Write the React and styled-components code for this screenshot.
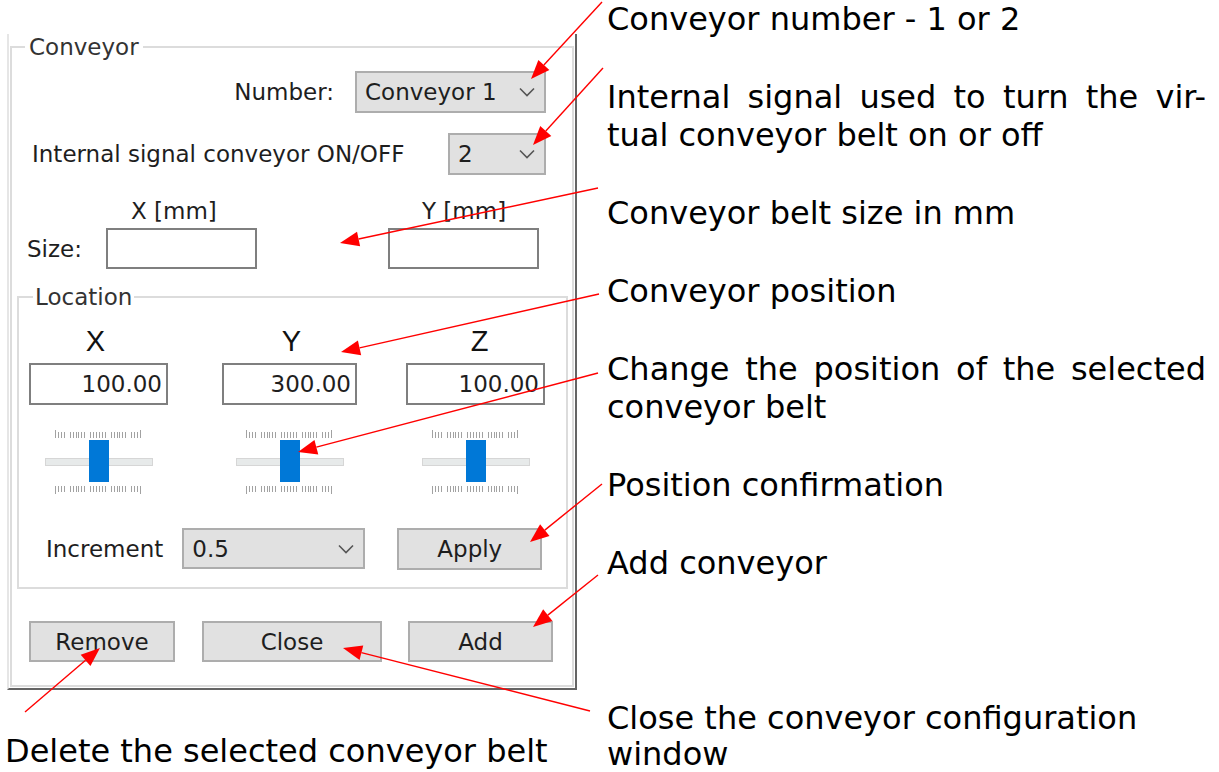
import React from 'react';
import styled, { createGlobalStyle } from 'styled-components';

const GlobalStyle = createGlobalStyle`
  html, body {
    margin: 0;
    padding: 0;
    background: #fff;
  }
  body {
    font-family: "DejaVu Sans", Verdana, sans-serif;
  }
`;

const Page = styled.div`
  position: relative;
  width: 1219px;
  height: 772px;
  display: flex;
  overflow: hidden;
  background: #fff;
`;

const LeftCol = styled.div`
  flex: none;
  width: 590px;
  display: flex;
  flex-direction: column;
`;

/* dialog window, cropped at the top */
const Window = styled.div`
  margin: 34px 0 0 7px;
  width: 570px;
  box-sizing: border-box;
  border-left: 2px solid #e6e6e6;
  border-right: 2px solid #646464;
  border-bottom: 2px solid #646464;
  padding: 0 1px 1px 1px;
  background: #fff;
  font-size: 23px;
  color: #1e1e1e;
`;

const Group = styled.fieldset`
  margin: ${(p) => p.$margin || '0'};
  min-width: 0;
  padding: ${(p) => p.$pad || '0'};
  border: 2px solid #dcdcdc;
`;

const Legend = styled.legend`
  margin-left: ${(p) => p.$offset}px;
  padding: 0 ${(p) => p.$padX}px;
  font-size: 23px;
  line-height: 26px;
  color: #333;
`;

const Label = styled.span`
  line-height: 26px;
  white-space: nowrap;
`;

const NumberRow = styled.div`
  margin-top: 11px;
  padding-right: 26px;
  display: flex;
  justify-content: flex-end;
  align-items: center;
  gap: 21px;
`;

const SignalRow = styled.div`
  margin-top: 20px;
  padding: 0 26px 0 20px;
  display: flex;
  justify-content: space-between;
  align-items: center;
`;

const Combo = styled.div`
  width: ${(p) => p.$w}px;
  height: ${(p) => p.$h || 42}px;
  margin-left: ${(p) => p.$ml || 0}px;
  box-sizing: border-box;
  padding: 0 9px 0 8px;
  display: flex;
  align-items: center;
  justify-content: space-between;
  background: #e1e1e1;
  border: 2px solid #adadad;
  white-space: nowrap;
`;

const SizeGrid = styled.div`
  margin-top: 25px;
  display: grid;
  grid-template-columns: 94px 151px 131px 151px;
  grid-template-rows: 22px 41px;
  row-gap: 6px;
  align-items: center;
`;

const SizeHeader = styled.div`
  grid-column: ${(p) => p.$col};
  padding-left: ${(p) => p.$pad}px;
  line-height: 22px;
  white-space: nowrap;
`;

const SizeLabel = styled.div`
  padding-left: 15px;
  line-height: 26px;
`;

const TextBox = styled.div`
  grid-column: ${(p) => p.$col || 'auto'};
  width: ${(p) => p.$w}px;
  height: ${(p) => p.$h}px;
  box-sizing: border-box;
  border: 2px solid #7f7f7f;
  background: #fff;
  text-align: right;
  padding-right: 4px;
  line-height: ${(p) => p.$h - 4}px;
`;

const LocGrid = styled.div`
  margin: 15px 0 0 10px;
  display: grid;
  grid-template-columns: 193px 184px 139px;
  justify-items: start;
`;

const AxisCell = styled.div`
  width: ${(p) => p.$w}px;
  display: flex;
  flex-direction: column;
  align-items: center;
`;

const AxisTitle = styled.div`
  padding-left: ${(p) => (p.$shift > 0 ? p.$shift * 2 : 0)}px;
  padding-right: ${(p) => (p.$shift < 0 ? -p.$shift * 2 : 0)}px;
  font-family: "Liberation Sans", Arial, sans-serif;
  font-size: 29px;
  line-height: 32px;
  color: #111;
  margin-bottom: 6px;
`;

const SliderWrap = styled.div`
  margin-top: 25px;
  width: 108px;
  display: flex;
  flex-direction: column;
  align-items: center;
`;

const TrackArea = styled.div`
  position: relative;
  width: 108px;
  height: 42px;
  margin: 2px 0 4px;
  display: flex;
  justify-content: center;

  &::before {
    content: '';
    position: absolute;
    left: 0;
    right: 0;
    top: 18px;
    height: 8px;
    box-sizing: border-box;
    background: #e7eaea;
    border: 1px solid #d6d6d6;
  }
`;

const Thumb = styled.div`
  position: relative;
  width: 20px;
  height: 42px;
  background: #0078d7;
`;

const IncrementRow = styled.div`
  margin: 33px 0 0 27px;
  height: 43px;
  display: flex;
  align-items: center;
`;

const Button = styled.button`
  width: ${(p) => p.$w}px;
  height: ${(p) => p.$h || 41}px;
  margin-left: ${(p) => p.$ml || 0}px;
  box-sizing: border-box;
  padding: 0;
  background: #e1e1e1;
  border: 2px solid #adadad;
  font-family: "DejaVu Sans", Verdana, sans-serif;
  font-size: 23px;
  color: #1e1e1e;
`;

const ButtonRow = styled.div`
  margin-top: 32px;
  padding-left: 17px;
  display: flex;
  align-items: center;
`;

const Notes = styled.div`
  flex: none;
  width: 599px;
  margin-left: 17px;
  display: flex;
  flex-direction: column;
  gap: 40px;
`;

const Note = styled.div`
  margin-top: ${(p) => p.$mt || 0}px;
  font-size: 32px;
  line-height: ${(p) => p.$lh || 38}px;
  color: #000;
`;

const NoteLine = styled.span`
  display: block;
  white-space: nowrap;
  text-align: ${(p) => (p.$justify ? 'justify' : 'left')};
  text-align-last: ${(p) => (p.$justify ? 'justify' : 'auto')};
`;

const Caption = styled.div`
  margin: 43px 0 0 5px;
  font-size: 32px;
  line-height: 36px;
  color: #000;
  white-space: nowrap;
`;

const Overlay = styled.svg`
  position: absolute;
  left: 0;
  top: 0;
  pointer-events: none;
`;

function Chevron() {
  return (
    <svg width="16" height="10" viewBox="0 0 16 10">
      <polyline points="1,1.5 8,8.5 15,1.5" fill="none" stroke="#555" strokeWidth="1.6" />
    </svg>
  );
}

function Ticks({ flip }) {
  const gaps = [4, 11, 18, 25];
  const lines = [];
  for (let i = 0; i < 30; i += 1) {
    if (!gaps.includes(i)) {
      const x = Math.round(i * 2.93) + 0.5;
      const end = i === 0 || i === 29;
      const y1 = flip ? 0 : end ? 0 : 2;
      const y2 = flip ? (end ? 8 : 6) : 8;
      lines.push(<line key={i} x1={x} x2={x} y1={y1} y2={y2} stroke="#a2a2a2" strokeWidth="1" />);
    }
  }
  return (
    <svg width="88" height="8" viewBox="0 0 88 8" shapeRendering="crispEdges">
      {lines}
    </svg>
  );
}

function Slider() {
  return (
    <SliderWrap>
      <Ticks />
      <TrackArea>
        <Thumb />
      </TrackArea>
      <Ticks flip />
    </SliderWrap>
  );
}

function Arrow({ from, to }) {
  const [x1, y1] = from;
  const [x2, y2] = to;
  const len = Math.hypot(x2 - x1, y2 - y1);
  const ux = (x2 - x1) / len;
  const uy = (y2 - y1) / len;
  const hl = 19;
  const hw = 7.5;
  const bx = x2 - ux * hl;
  const by = y2 - uy * hl;
  const px = -uy * hw;
  const py = ux * hw;
  return (
    <g>
      <line x1={x1} y1={y1} x2={bx} y2={by} stroke="#ff0000" strokeWidth="1.4" />
      <polygon
        points={`${x2},${y2} ${bx + px},${by + py} ${bx - px},${by - py}`}
        fill="#ff0000"
      />
    </g>
  );
}

const axes = [
  { name: 'X', value: '100.00', w: 139, shift: -3 },
  { name: 'Y', value: '300.00', w: 135, shift: 2 },
  { name: 'Z', value: '100.00', w: 139, shift: 4 },
];

const notes = [
  { lines: [['Conveyor number - 1 or 2']] },
  { lines: [['Internal signal used to turn the vir-', true], ['tual conveyor belt on or off']] },
  { lines: [['Conveyor belt size in mm']] },
  { lines: [['Conveyor position']] },
  { lines: [['Change the position of the selected', true], ['conveyor belt']] },
  { lines: [['Position confirmation']] },
  { lines: [['Add conveyor']] },
  { lines: [['Close the conveyor configuration'], ['window']], mt: 78, lh: 36 },
];

const arrows = [
  { from: [602, 2], to: [531, 79] },
  { from: [603, 68], to: [533, 145] },
  { from: [598, 188], to: [340, 243] },
  { from: [599, 294], to: [341, 352] },
  { from: [598, 373], to: [298, 452] },
  { from: [602, 484], to: [530, 542] },
  { from: [598, 575], to: [533, 627] },
  { from: [590, 711], to: [343, 648] },
  { from: [25, 712], to: [100, 648] },
];

export default function App() {
  return (
    <>
      <GlobalStyle />
      <Page>
        <LeftCol>
          <Window>
            <Group $pad="0 0 23px 0">
              <Legend $offset={13} $padX={4}>Conveyor</Legend>
              <NumberRow>
                <Label>Number:</Label>
                <Combo $w={191}>
                  <span>Conveyor 1</span>
                  <Chevron />
                </Combo>
              </NumberRow>
              <SignalRow>
                <Label>Internal signal conveyor ON/OFF</Label>
                <Combo $w={98}>
                  <span>2</span>
                  <Chevron />
                </Combo>
              </SignalRow>
              <SizeGrid>
                <SizeHeader $col={2} $pad={25}>X [mm]</SizeHeader>
                <SizeHeader $col={4} $pad={34}>Y [mm]</SizeHeader>
                <SizeLabel>Size:</SizeLabel>
                <TextBox $w={151} $h={41} />
                <TextBox $col={4} $w={151} $h={41} />
              </SizeGrid>
              <Group $margin="15px 4px 0 5px" $pad="0 0 17px 0">
                <Legend $offset={14} $padX={2}>Location</Legend>
                <LocGrid>
                  {axes.map((a) => (
                    <AxisCell key={a.name} $w={a.w}>
                      <AxisTitle $shift={a.shift}>{a.name}</AxisTitle>
                      <TextBox $w={a.w} $h={42}>{a.value}</TextBox>
                      <Slider />
                    </AxisCell>
                  ))}
                </LocGrid>
                <IncrementRow>
                  <Label>Increment</Label>
                  <Combo $w={183} $h={41} $ml={19}>
                    <span>0.5</span>
                    <Chevron />
                  </Combo>
                  <Button $w={145} $h={42} $ml={32}>Apply</Button>
                </IncrementRow>
              </Group>
              <ButtonRow>
                <Button $w={146}>Remove</Button>
                <Button $w={180} $ml={27}>Close</Button>
                <Button $w={145} $ml={26}>Add</Button>
              </ButtonRow>
            </Group>
          </Window>
          <Caption>Delete the selected conveyor belt</Caption>
        </LeftCol>
        <Notes>
          {notes.map((n, i) => (
            <Note key={i} $mt={n.mt} $lh={n.lh}>
              {n.lines.map(([text, justify]) => (
                <NoteLine key={text} $justify={justify}>{text}</NoteLine>
              ))}
            </Note>
          ))}
        </Notes>
        <Overlay width="1219" height="772" viewBox="0 0 1219 772">
          {arrows.map((a, i) => (
            <Arrow key={i} from={a.from} to={a.to} />
          ))}
        </Overlay>
      </Page>
    </>
  );
}
